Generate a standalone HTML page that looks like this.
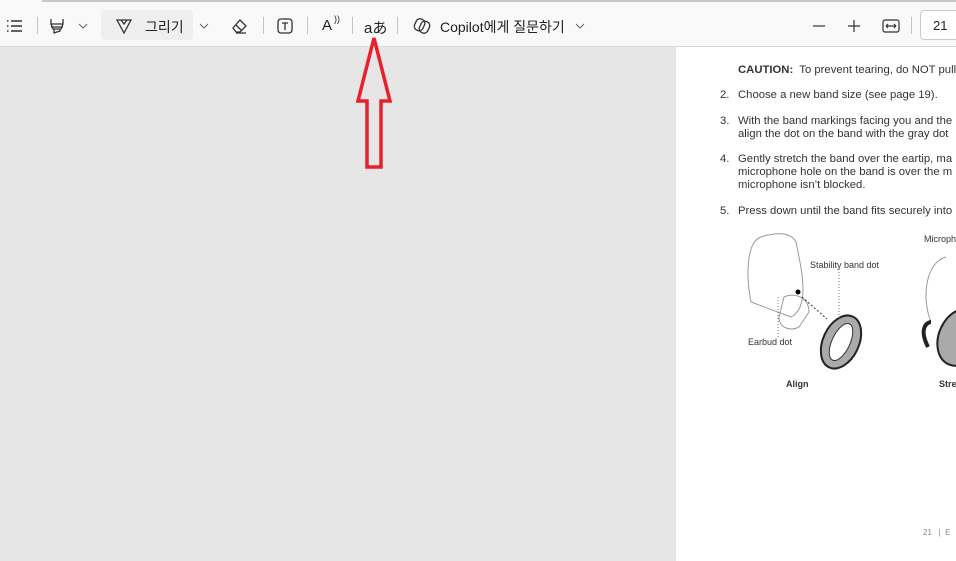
<!DOCTYPE html>
<html><head><meta charset="utf-8"><style>
*{margin:0;padding:0;box-sizing:border-box}
body{width:956px;height:561px;overflow:hidden;background:#e6e6e6;font-family:"Liberation Sans","Noto Sans CJK KR",sans-serif;position:relative}
.tb{position:absolute;left:0;top:0;width:956px;height:47px;background:#f9f9f9;border-bottom:1px solid #d8d8d8}
.topline{position:absolute;left:42px;top:0;width:914px;height:2px;background:#c8c8c8}
.ic{position:absolute;color:#333}
.sep{position:absolute;top:17px;width:1px;height:17px;background:#c4c4c4}
.t{position:absolute;font-size:14px;color:#222;top:17px}
.page{position:absolute;left:676px;top:47px;width:280px;height:514px;background:#fff}
.p{position:absolute;font-size:11.3px;color:#333;line-height:13px;white-space:nowrap}
.f{font-size:9px}
</style></head><body>
<div class="tb">
<div class="topline"></div>
<svg class="ic" style="left:6px;top:19px" width="18" height="14" viewBox="0 0 18 14" fill="none" stroke="#333" stroke-width="1.5"><path d="M1 2h1.5M5 2h11M1 7h1.5M5 7h11M1 12h1.5M5 12h11"/></svg>
<div class="sep" style="left:37px"></div>
<svg class="ic" style="left:48px;top:17px" width="18" height="18" viewBox="0 0 18 18" fill="none" stroke="#333" stroke-width="1.3"><path d="M3 2v5h12V2M3 7l2 5h8l2-5M3 10h12M6 12v4l6-2v-2"/></svg>
<svg class="ic" style="left:78px;top:22px" width="10" height="8" viewBox="0 0 10 8" fill="none" stroke="#666" stroke-width="1"><path d="M1 2l4 4 4-4"/></svg>
<div style="position:absolute;left:101px;top:10px;width:92px;height:30px;background:#efefef;border-radius:4px"></div>
<svg class="ic" style="left:115px;top:17px" width="18" height="18" viewBox="0 0 18 18" fill="none" stroke="#333" stroke-width="1.3"><path d="M2 3h14L9 16z M6 3l3 4 3-4"/></svg>
<div class="t" style="left:145px">그리기</div>
<svg class="ic" style="left:199px;top:22px" width="10" height="8" viewBox="0 0 10 8" fill="none" stroke="#666" stroke-width="1"><path d="M1 2l4 4 4-4"/></svg>
<svg class="ic" style="left:230px;top:17px" width="18" height="18" viewBox="0 0 18 18" fill="none" stroke="#333" stroke-width="1.3"><path d="M3 11l7-8 6 6-6 6H6z M6 8l6 6 M6 16h10"/></svg>
<div class="sep" style="left:263px"></div>
<svg class="ic" style="left:276px;top:17px" width="18" height="18" viewBox="0 0 18 18" fill="none" stroke="#333" stroke-width="1.3"><rect x="2" y="2" width="14" height="14" rx="3"/><path d="M6 6h6M9 6v7"/></svg>
<div class="sep" style="left:307px"></div>
<div class="t" style="left:322px;font-size:15px">A</div><div class="t" style="left:334px;top:14px;font-size:9px">))</div>
<div class="sep" style="left:352px"></div>
<div class="t" style="left:364px;font-size:15px">aあ</div>
<div class="sep" style="left:397px"></div>
<svg class="ic" style="left:412px;top:16px" width="20" height="20" viewBox="0 0 20 20" fill="none" stroke="#333" stroke-width="1.3"><rect x="3" y="3" width="9" height="12" rx="4" transform="rotate(25 8 9)"/><rect x="8" y="5" width="9" height="12" rx="4" transform="rotate(25 12 11)"/></svg>
<div class="t" style="left:440px">Copilot에게 질문하기</div>
<svg class="ic" style="left:575px;top:22px" width="10" height="8" viewBox="0 0 10 8" fill="none" stroke="#666" stroke-width="1"><path d="M1 2l4 4 4-4"/></svg>
<svg class="ic" style="left:812px;top:19px" width="14" height="14" viewBox="0 0 14 14" stroke="#333" stroke-width="1.2"><path d="M1 7h12"/></svg>
<svg class="ic" style="left:847px;top:19px" width="14" height="14" viewBox="0 0 14 14" stroke="#333" stroke-width="1.2"><path d="M1 7h12M7 1v12"/></svg>
<svg class="ic" style="left:882px;top:18px" width="18" height="16" viewBox="0 0 18 16" fill="none" stroke="#333" stroke-width="1.2"><rect x="1" y="2" width="16" height="12" rx="2"/><path d="M4 8h10M4 8l2-2M4 8l2 2M14 8l-2-2M14 8l-2 2"/></svg>
<div class="sep" style="left:911px"></div>
<div style="position:absolute;left:920px;top:10px;width:50px;height:30px;border:1px solid #ccc;border-radius:4px;background:#fff;font-size:13px;padding:7px 0 0 12px;color:#222">21</div>
</div>
<svg style="position:absolute;left:0;top:0" width="956" height="561"><path d="M374 38L390 101H381V167H367V101H358Z" fill="none" stroke="#e8202a" stroke-width="3.5" stroke-linejoin="miter"/></svg>
<div class="page">
<div class="p" style="left:62px;top:17px"><b>CAUTION:</b>&nbsp; To prevent tearing, do NOT pull</div>
<div class="p" style="left:44px;top:42px">2.</div><div class="p" style="left:62px;top:42px">Choose a new band size (see page 19).</div>
<div class="p" style="left:44px;top:68px">3.</div><div class="p" style="left:62px;top:68px">With the band markings facing you and the</div>
<div class="p" style="left:62px;top:81px">align the dot on the band with the gray dot</div>
<div class="p" style="left:44px;top:106px">4.</div><div class="p" style="left:62px;top:106px">Gently stretch the band over the eartip, ma</div>
<div class="p" style="left:62px;top:119px">microphone hole on the band is over the m</div>
<div class="p" style="left:62px;top:132px">microphone isn’t blocked.</div>
<div class="p" style="left:44px;top:158px">5.</div><div class="p" style="left:62px;top:158px">Press down until the band fits securely into</div>
<div class="p f" style="left:134px;top:212px">Stability band dot</div>
<div class="p f" style="left:72px;top:289px">Earbud dot</div>
<div class="p f" style="left:110px;top:331px;font-weight:bold">Align</div>
<div class="p f" style="left:248px;top:186px">Microph</div>
<div class="p f" style="left:263px;top:331px;font-weight:bold">Stre</div>
<svg style="position:absolute;left:0;top:0" width="280" height="514" fill="none" stroke="#999" stroke-width="1">
<path d="M85 190c-15 5-15 40-10 65l40 15c20-10 10-50 5-75c-5-10-20-10-35-5z"/>
<path d="M108 250c10-5 25 0 25 15l-10 15c-10 5-20 0-20-10z"/>
<ellipse cx="165" cy="295" rx="18" ry="28" transform="rotate(25 165 295)" fill="#aaa" stroke="#222" stroke-width="2"/>
<ellipse cx="165" cy="295" rx="9" ry="20" transform="rotate(25 165 295)" fill="#fff" stroke="#333"/>
<circle cx="122" cy="245" r="2.5" fill="#000" stroke="none"/>
<path d="M126 250l25 22" stroke="#333" stroke-dasharray="2 2"/>
<path d="M163 222v50M102 250v42" stroke="#777" stroke-dasharray="1 2"/>
<path d="M270 210c-20 5-25 40-15 65" />
<ellipse cx="285" cy="290" rx="22" ry="30" transform="rotate(25 285 290)" fill="#aaa" stroke="#222" stroke-width="2"/>
<path d="M252 300c-10-20 0-25 3-25" stroke="#222" stroke-width="4"/>
</svg>
<div class="p" style="left:247px;top:479px;font-size:8px;color:#888">21&nbsp;&nbsp;&nbsp;|&nbsp;&nbsp;E</div>
</div>
</body></html>
